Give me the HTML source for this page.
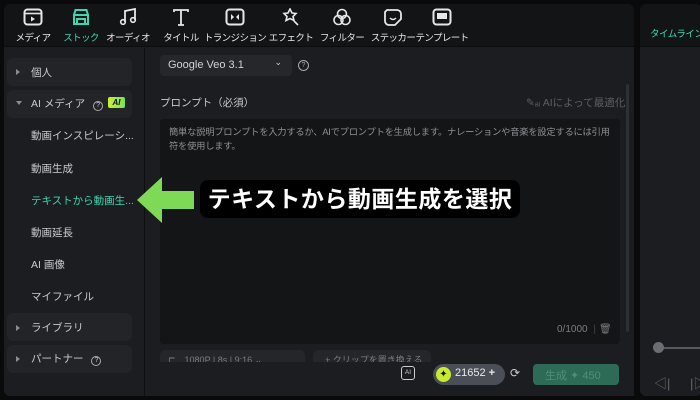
<!DOCTYPE html>
<html><head><meta charset="utf-8"><style>
*{margin:0;padding:0;box-sizing:border-box}
body{width:700px;height:400px;background:#0a0a0b;position:relative;overflow:hidden;font-family:"Liberation Sans","Noto Sans CJK JP",sans-serif;color:#c9cbce}
.abs{position:absolute}
.main{left:4px;top:4px;width:630px;height:392px;background:#1b1d20;border-radius:6px;overflow:hidden}
.top{left:0;top:0;width:630px;height:43px;background:#131416;border-bottom:1px solid #0b0c0d}
.right{left:640px;top:4px;width:62px;height:392px;background:#1b1d20;border-radius:6px;overflow:hidden}
.tb{position:absolute;top:8px;width:70px;margin-left:-35px;text-align:center;font-size:9.5px;letter-spacing:-0.6px;white-space:nowrap;color:#e6e7e8}
.tb svg{display:block;margin:0 auto 4px}
.grp{position:absolute;left:7px;width:125px;height:28px;background:#222428;border-radius:6px}
.item{position:absolute;left:31px;font-size:10.5px;color:#c9cbce;white-space:nowrap}
.tri{position:absolute;left:16px;width:0;height:0;border-left:4px solid #8a8d91;border-top:3px solid transparent;border-bottom:3px solid transparent}
</style></head><body>
<div class="abs main">
 <div class="abs top"></div>
 <div class="abs" style="left:140px;top:44px;width:1px;height:348px;background:#0e0f10"></div>
</div>
<div class="abs right">
 <div class="abs" style="left:0;top:0;width:62px;height:43px;background:#131416;border-bottom:1px solid #0b0c0d"></div>
 <div class="abs" style="left:10px;top:22px;font-size:9.5px;letter-spacing:-0.5px;white-space:nowrap;color:#3ed6b0">タイムライン</div>
 <div class="abs" style="left:13px;top:343px;width:50px;height:2px;background:#55585c"></div>
 <div class="abs" style="left:13px;top:338px;width:11px;height:11px;border-radius:50%;background:#6a6d71"></div>
 <div class="abs" style="left:14px;top:369px;font-size:13px;color:#666;white-space:nowrap">◁|</div>
 <div class="abs" style="left:50px;top:369px;font-size:13px;color:#666;white-space:nowrap">|▷</div>
</div>

<div class="tb" style="left:33px"><svg width="20" height="18" viewBox="0 0 20 18"><rect x="1.5" y="1.5" width="17" height="15" rx="3" fill="none" stroke="#e6e7e8" stroke-width="2"/><line x1="2" y1="5.5" x2="18" y2="5.5" stroke="#e6e7e8" stroke-width="1.6"/><path d="M8 8.5v5l4-2.5z" fill="#e6e7e8"/></svg>メディア</div>
<div class="tb" style="left:81px;color:#3ed6b0"><svg width="20" height="18" viewBox="0 0 20 18"><path d="M2 7h16M3 7l1.5-5h11L17 7M3 7v9h14V7M6 16v-5h8v5" fill="none" stroke="#3ed6b0" stroke-width="2"/></svg>ストック</div>
<div class="tb" style="left:128px"><svg width="20" height="18" viewBox="0 0 20 18"><path d="M7 14V3l10-2v11" fill="none" stroke="#e6e7e8" stroke-width="1.8"/><circle cx="5" cy="14" r="2.3" fill="none" stroke="#e6e7e8" stroke-width="1.6"/><circle cx="15" cy="12" r="2.3" fill="none" stroke="#e6e7e8" stroke-width="1.6"/></svg>オーディオ</div>
<div class="tb" style="left:181px"><svg width="20" height="18" viewBox="0 0 20 18"><path d="M3 4V2h14v2M10 2v15M7 17h6" fill="none" stroke="#e6e7e8" stroke-width="1.8"/></svg>タイトル</div>
<div class="tb" style="left:235px"><svg width="20" height="18" viewBox="0 0 20 18"><rect x="1.5" y="1.5" width="17" height="15" rx="3" fill="none" stroke="#e6e7e8" stroke-width="2"/><path d="M6 6v6l3-3zM14 6v6l-3-3z" fill="#e6e7e8"/></svg>トランジション</div>
<div class="tb" style="left:291px"><svg width="20" height="18" viewBox="0 0 20 18"><path d="M9 1l2 4 4 .5-3 3 1 4-4-2-4 2 1-4-3-3 4-.5zM13 13l4 4" fill="none" stroke="#e6e7e8" stroke-width="1.6"/></svg>エフェクト</div>
<div class="tb" style="left:342px"><svg width="20" height="18" viewBox="0 0 20 18"><circle cx="10" cy="6" r="4.5" fill="none" stroke="#e6e7e8" stroke-width="1.6"/><circle cx="6.5" cy="12" r="4.5" fill="none" stroke="#e6e7e8" stroke-width="1.6"/><circle cx="13.5" cy="12" r="4.5" fill="none" stroke="#e6e7e8" stroke-width="1.6"/></svg>フィルター</div>
<div class="tb" style="left:393px"><svg width="20" height="18" viewBox="0 0 20 18"><path d="M4 2h10a4 4 0 0 1 4 4v5l-6 6H6a4 4 0 0 1-4-4V4z" fill="none" stroke="#e6e7e8" stroke-width="1.8"/><path d="M7 10q3 3 6 0" fill="none" stroke="#e6e7e8" stroke-width="1.5"/></svg>ステッカー</div>
<div class="tb" style="left:442px"><svg width="20" height="18" viewBox="0 0 20 18"><rect x="1.5" y="1.5" width="17" height="15" rx="3" fill="none" stroke="#e6e7e8" stroke-width="2"/><rect x="5" y="5" width="10" height="6" fill="#e6e7e8"/></svg>テンプレート</div>

<div class="grp" style="top:58px"></div><div class="tri" style="top:69px"></div><div class="item" style="top:65px">個人</div>
<div class="grp" style="top:90px"></div><div class="tri" style="top:101px;border-left:3px solid transparent;border-right:3px solid transparent;border-top:4px solid #8a8d91;border-bottom:0"></div>
<div class="item" style="top:96px">AI メディア <span style="display:inline-block;width:10px;height:10px;border:1px solid #aaa;border-radius:50%;font-size:7px;text-align:center;line-height:8px;margin-left:5px">?</span></div>
<div class="abs" style="left:108px;top:97px;width:17px;height:11px;background:linear-gradient(90deg,#c9f230,#7be05c);border-radius:2px;font-size:8px;font-weight:bold;font-style:italic;color:#111;text-align:center;line-height:11px">AI</div>
<div class="item" style="top:128px">動画インスピレーシ...</div>
<div class="item" style="top:161px">動画生成</div>
<div class="item" style="top:193px;color:#3ed6b0">テキストから動画生...</div>
<div class="item" style="top:225px">動画延長</div>
<div class="item" style="top:257px">AI 画像</div>
<div class="item" style="top:289px">マイファイル</div>
<div class="grp" style="top:313px"></div><div class="tri" style="top:325px"></div><div class="item" style="top:320px">ライブラリ</div>
<div class="grp" style="top:345px"></div><div class="tri" style="top:356px"></div><div class="item" style="top:351px">パートナー <span style="display:inline-block;width:10px;height:10px;border:1px solid #aaa;border-radius:50%;font-size:7px;text-align:center;line-height:8px;margin-left:5px">?</span></div>

<div class="abs" style="left:160px;top:55px;width:132px;height:21px;background:#25272b;border-radius:4px;font-size:11px;color:#d0d2d5;padding:4px 0 0 8px">Google Veo 3.1<span style="position:absolute;right:10px;top:2px;font-size:9px">⌄</span></div>
<div class="abs" style="left:298px;top:60px;width:11px;height:11px;border:1px solid #aaa;border-radius:50%;font-size:7px;text-align:center;line-height:9px;color:#aaa">?</div>
<div class="abs" style="left:160px;top:95px;font-size:10.5px;color:#c9cbce">プロンプト（必須）</div>
<div class="abs" style="left:526px;top:95px;font-size:10.5px;color:#5c5f63;white-space:nowrap">✎ₐᵢ AIによって最適化</div>
<div class="abs" style="left:626px;top:84px;width:3px;height:248px;background:#2e3034;border-radius:2px"></div>
<div class="abs" style="left:160px;top:119px;width:460px;height:225px;background:#141517;border-radius:4px"></div>
<div class="abs" style="left:169px;top:125px;width:448px;font-size:9.3px;letter-spacing:-0.25px;line-height:14px;color:#8d9094">簡単な説明プロンプトを入力するか、AIでプロンプトを生成します。ナレーションや音楽を設定するには引用符を使用します。</div>
<div class="abs" style="left:557px;top:324px;font-size:10px;color:#7a7d81;white-space:nowrap">0/1000 <span style="color:#444;margin:0 3px">|</span>🗑</div>
<div class="abs" style="left:160px;top:350px;width:145px;height:12px;background:#24262a;border-radius:5px 5px 0 0;font-size:9px;color:#7a7d81;padding:0 0 0 8px;overflow:hidden;line-height:20px;white-space:nowrap">⊏　1080P | 8s | 9:16 ⌄</div>
<div class="abs" style="left:313px;top:350px;width:118px;height:12px;background:#24262a;border-radius:5px 5px 0 0;font-size:9px;color:#7a7d81;padding:0 0 0 12px;overflow:hidden;line-height:20px;white-space:nowrap">+ クリップを置き換える</div>
<div class="abs" style="left:145px;top:362px;width:489px;height:34px;background:#1b1d20"></div>
<div class="abs" style="left:401px;top:366px;width:14px;height:14px;border:1.5px solid #ccc;border-radius:3px;font-size:6.5px;text-align:center;line-height:11px;color:#ccc">AI</div>
<div class="abs" style="left:433px;top:364px;width:72px;height:21px;background:#4a4f57;border-radius:11px;font-size:11px;color:#e8e9ea;padding:3px 0 0 22px;white-space:nowrap">21652 <b>+</b></div>
<div class="abs" style="left:436px;top:367px;width:15px;height:15px;background:#c6ec2c;border-radius:50%;font-size:10px;text-align:center;line-height:15px;color:#111">✦</div>
<div class="abs" style="left:510px;top:366px;font-size:12px;color:#ccc">⟳</div>
<div class="abs" style="left:533px;top:364px;width:86px;height:21px;background:#2e6b57;border-radius:4px;font-size:11px;color:#4f8e78;padding:3px 0 0 12px;white-space:nowrap">生成 ✦ 450</div>

<svg class="abs" style="left:135px;top:176px" width="62" height="48"><path d="M2 24L27 1v14h32v18H27v14z" fill="#7ed957"/></svg>
<div class="abs" style="left:200px;top:180px;width:320px;height:38px;background:#000;border-radius:8px;font-size:23px;font-weight:bold;color:#fff;text-align:center;line-height:38px;letter-spacing:0.5px;white-space:nowrap">テキストから動画生成を選択</div>
</body></html>
